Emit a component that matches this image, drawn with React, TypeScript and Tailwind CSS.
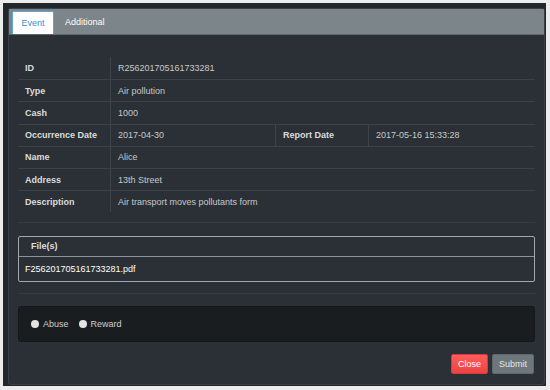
import React from 'react';

interface Row {
  label: string;
  value: string;
  label2?: string;
  value2?: string;
}

const rows: Row[] = [
  { label: 'ID', value: 'R256201705161733281' },
  { label: 'Type', value: 'Air pollution' },
  { label: 'Cash', value: '1000' },
  { label: 'Occurrence Date', value: '2017-04-30', label2: 'Report Date', value2: '2017-05-16 15:33:28' },
  { label: 'Name', value: 'Alice' },
  { label: 'Address', value: '13th Street' },
  { label: 'Description', value: 'Air transport moves pollutants form' },
];

export default function App() {
  return (
    <div
      className="w-[550px] h-[390px] bg-[#ececec] pt-[3px] pl-[3px] pr-[4px] pb-[4px] text-[9px] leading-none"
      style={{ fontFamily: '"Liberation Sans", Arial, sans-serif' }}
    >
      <div className="h-full bg-[#22272b] pl-[5px] pt-[5px] pr-[1px] pb-[1px]">
        <div className="h-full flex flex-col rounded-[3px] border border-[#3a4046] bg-[#2a3035]">
          {/* Tabs */}
          <div className="h-[26px] bg-[#7b858a] border-b border-[#5e676c] flex items-end pl-[3px]">
            <div className="h-[23px] w-[42px] flex items-center justify-center bg-white border border-b-0 border-[#5aa7e0] rounded-t-[2px] text-[#3b8ed4]">
              Event
            </div>
            <div className="h-[23px] px-[11px] flex items-center text-white">Additional</div>
          </div>

          {/* Body */}
          <div className="px-[9px] pt-[22px]">
            <div className="flex flex-col">
              {rows.map((row, i) => (
                <div
                  key={row.label}
                  className={`flex h-[22.2px] ${i > 0 ? 'border-t border-[#3c4348]' : ''}`}
                >
                  <div className="w-[93px] shrink-0 border-r border-[#3c4348] pl-[7px] pt-px flex items-center font-bold text-[#dcdcdc]">
                    {row.label}
                  </div>
                  {row.label2 ? (
                    <>
                      <div className="w-[165px] shrink-0 border-r border-[#3c4348] pl-[7px] pt-px flex items-center text-[#c9c9c9]">
                        {row.value}
                      </div>
                      <div className="w-[93px] shrink-0 border-r border-[#3c4348] pl-[7px] pt-px flex items-center font-bold text-[#dcdcdc]">
                        {row.label2}
                      </div>
                      <div className="flex-1 pl-[7px] pt-px flex items-center text-[#c9c9c9]">{row.value2}</div>
                    </>
                  ) : (
                    <div className="flex-1 pl-[7px] pt-px flex items-center text-[#c9c9c9]">{row.value}</div>
                  )}
                </div>
              ))}
            </div>

            <div className="mt-[10px] h-px bg-[#353b40]" />

            {/* Files */}
            <div className="mt-[13px] rounded-[2px] border border-[#a2a7aa]">
              <div className="h-[20px] flex items-center pl-[12px] font-bold text-[#dedede] border-b border-[#8c9296]">
                File(s)
              </div>
              <div className="h-[24px] flex items-center pl-[6px] text-white">
                F256201705161733281.pdf
              </div>
            </div>

            <div className="mt-[11px] h-px bg-[#353b40]" />

            {/* Report kind */}
            <div className="mt-[12px] h-[36px] rounded-[3px] border border-[#15181a] bg-[#1a1d20] flex items-center pl-[12px] gap-[4px] text-[#cfcfcf]">
              <span className="w-[8px] h-[8px] rounded-full bg-[#e2e2e2]" />
              <span className="mr-[6px]">Abuse</span>
              <span className="w-[8px] h-[8px] rounded-full bg-[#e2e2e2]" />
              <span>Reward</span>
            </div>

            {/* Footer */}
            <div className="mt-[12px] flex justify-end gap-[4px] pr-px">
              <button className="h-[20px] w-[37px] rounded-[2px] bg-gradient-to-b from-[#ff5c5c] to-[#ec4242] border border-[#d63a3a] text-white">
                Close
              </button>
              <button className="h-[20px] w-[42px] rounded-[2px] bg-[#6d777c] border border-[#5f686d] text-[#e6e6e6]">
                Submit
              </button>
            </div>
          </div>
        </div>
      </div>
    </div>
  );
}
